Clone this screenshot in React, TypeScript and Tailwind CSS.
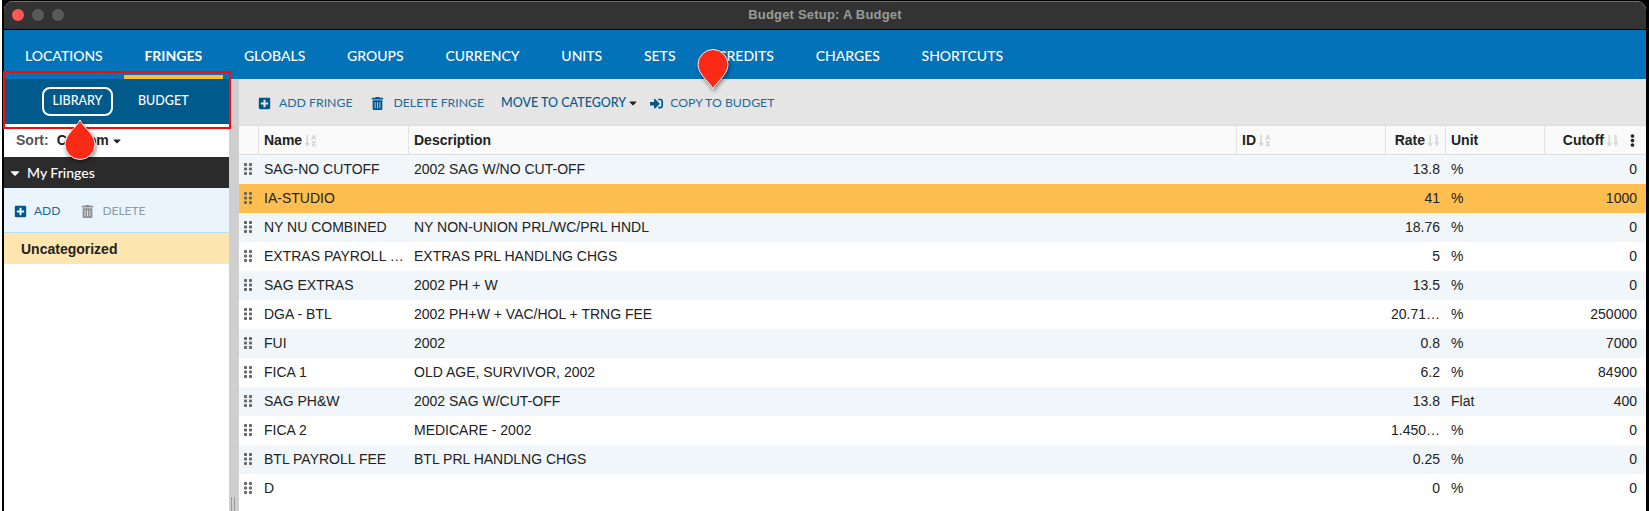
import { FaCaretDown, FaEllipsisV, FaPlusSquare, FaSignInAlt, FaSortAlphaDown, FaSortNumericDown, FaTrashAlt } from "react-icons/fa";

const tabs = ["LOCATIONS", "FRINGES", "GLOBALS", "GROUPS", "CURRENCY", "UNITS", "SETS", "CREDITS", "CHARGES", "SHORTCUTS"];

const rows = [
	{ name: "SAG-NO CUTOFF", desc: "2002 SAG W/NO CUT-OFF", rate: "13.8", unit: "%", cutoff: "0" },
	{ name: "IA-STUDIO", desc: "", rate: "41", unit: "%", cutoff: "1000" },
	{ name: "NY NU COMBINED", desc: "NY NON-UNION PRL/WC/PRL HNDL", rate: "18.76", unit: "%", cutoff: "0" },
	{ name: "EXTRAS PAYROLL …", desc: "EXTRAS PRL HANDLNG CHGS", rate: "5", unit: "%", cutoff: "0" },
	{ name: "SAG EXTRAS", desc: "2002 PH + W", rate: "13.5", unit: "%", cutoff: "0" },
	{ name: "DGA - BTL", desc: "2002 PH+W + VAC/HOL + TRNG FEE", rate: "20.71…", unit: "%", cutoff: "250000" },
	{ name: "FUI", desc: "2002", rate: "0.8", unit: "%", cutoff: "7000" },
	{ name: "FICA 1", desc: "OLD AGE, SURVIVOR, 2002", rate: "6.2", unit: "%", cutoff: "84900" },
	{ name: "SAG PH&W", desc: "2002 SAG W/CUT-OFF", rate: "13.8", unit: "Flat", cutoff: "400" },
	{ name: "FICA 2", desc: "MEDICARE - 2002", rate: "1.450…", unit: "%", cutoff: "0" },
	{ name: "BTL PAYROLL FEE", desc: "BTL PRL HANDLNG CHGS", rate: "0.25", unit: "%", cutoff: "0" },
	{ name: "D", desc: "", rate: "0", unit: "%", cutoff: "0" },
];

const gridCols = "grid grid-cols-[20px_150px_828px_149px_60px_99px_1fr]";

function Grip() {
	return (
		<svg width="8" height="12" viewBox="0 0 8 12" className="ml-[-2px] mt-[-2px] fill-[#666]">
			{[0, 4.5, 9].map((y) => (
				<g key={y}>
					<rect x="0" y={y} width="3" height="3" rx="0.8" />
					<rect x="5" y={y} width="3" height="3" rx="0.8" />
				</g>
			))}
		</svg>
	);
}

function Pin({ className, flip }: { className: string; flip?: boolean }) {
	return (
		<svg
			width="32"
			height="42"
			viewBox="0 0 32 42"
			className={`absolute drop-shadow-[1px_2px_2px_rgba(0,0,0,0.45)] ${className}`}
		>
			<path
				d={flip ? "M16 40C13 33 1 26 1 15.5a15 15 0 0 1 30 0C31 26 19 33 16 40Z" : "M16 2C19 9 31 16 31 26.5a15 15 0 0 1-30 0C1 16 13 9 16 2Z"}
				fill="#fb2a17"
				stroke="#f4f4f4"
				strokeWidth="1"
			/>
		</svg>
	);
}

function HeaderCell({ label, kind, right }: { label: string; kind?: "alpha" | "num"; right?: boolean }) {
	return (
		<div className={`flex items-center border-r border-[#e2e2e2] ${right ? "justify-end pr-[5px]" : "pl-[5px]"}`}>
			<span className="font-bold text-[#222]">{label}</span>
			{kind === "alpha" && <FaSortAlphaDown className="ml-[2px] text-[13px] text-[#d6d6d6]" />}
			{kind === "num" && <FaSortNumericDown className="ml-[2px] text-[13px] text-[#d6d6d6]" />}
		</div>
	);
}

export default function App() {
	return (
		<div className="relative flex h-[511px] w-[1649px] overflow-hidden bg-black pt-px pr-[3px] font-['Liberation_Sans',sans-serif]">
			<div className="absolute top-0 bottom-0 left-0 w-[2px] bg-white" />
			<div className="ml-[4px] flex min-w-0 flex-1 flex-col overflow-hidden rounded-t-[9px] bg-white">
				<div className="relative flex h-[28px] shrink-0 items-center justify-center border-t border-[#6f6f6f] bg-[#333333]">
					<div className="absolute top-[7px] left-[8px] flex gap-[8px]">
						<span className="h-[12px] w-[12px] rounded-full bg-[#fc5753]" />
						<span className="h-[12px] w-[12px] rounded-full bg-[#5a5a5a]" />
						<span className="h-[12px] w-[12px] rounded-full bg-[#5a5a5a]" />
					</div>
					<span className="mt-[-1px] text-[13px] font-bold tracking-[0.2px] text-[#9a9a9a]">Budget Setup: A Budget</span>
				</div>
				<div className="h-px shrink-0 bg-black" />
				<nav className="flex h-[49px] shrink-0 bg-[#0272b9] pl-[21px] font-['Lato',sans-serif] text-[14px] font-medium text-white">
					{tabs.map((tab) => (
						<span
							key={tab}
							className={`border-b-4 px-[20.85px] pt-[15px] first:pl-0 ${tab === "FRINGES" ? "border-[#fdbe33] font-bold" : "border-transparent"}`}
						>
							{tab}
						</span>
					))}
				</nav>
				<div className="flex min-h-0 flex-1">
					<aside className="flex w-[225px] shrink-0 flex-col bg-white">
						<div className="flex h-[45px] items-center bg-[#005a8c] pl-[38px] font-['Lato',sans-serif] text-[12.5px] font-medium text-white">
							<span className="flex h-[29px] w-[71px] items-center justify-center rounded-[8px] border-2 border-white">LIBRARY</span>
							<span className="ml-[25px]">BUDGET</span>
						</div>
						<div className="flex h-[33px] items-center pl-[12px] text-[14px] font-bold text-[#222]">
							<span className="mr-[8px] text-[#555]">Sort:</span>
							<span>Custom</span>
							<FaCaretDown className="ml-[2px] text-[12px]" />
						</div>
						<div className="flex h-[31px] items-center bg-[#2b2b2b] pl-[4px] font-['Lato',sans-serif] text-[14px] font-medium text-white">
							<FaCaretDown className="mr-[5px] text-[14px]" />
							My Fringes
						</div>
						<div className="flex h-[45px] items-center border-b border-[#b9dcee] bg-[#e9f4fc] pt-[2px] pl-[10px] font-['Lato',sans-serif] text-[12px]">
							<FaPlusSquare className="text-[13px] text-[#00568a]" />
							<span className="ml-[7px] text-[#1f6a99]">ADD</span>
							<FaTrashAlt className="ml-[21px] text-[13px] text-[#8f8f8f]" />
							<span className="ml-[8px] text-[#8f9ba3]">DELETE</span>
						</div>
						<div className="flex h-[31px] items-center bg-[#fde6b0] pt-[1px] pl-[17px] text-[14px] font-bold text-[#222]">Uncategorized</div>
					</aside>
					<div className="relative w-[10px] shrink-0 bg-[#cfcfcf]">
						<div className="absolute bottom-0 left-[2px] h-[14px] w-[4px] border-x border-[#999]" />
					</div>
					<main className="flex min-w-0 flex-1 flex-col">
						<div className="flex h-[46px] shrink-0 items-center bg-[#e5e5e5] pt-[2px] pl-[19px] font-['Lato',sans-serif] text-[12.25px] text-[#1f6a99]">
							<FaPlusSquare className="text-[13px] text-[#00568a]" />
							<span className="ml-[8px]">ADD FRINGE</span>
							<FaTrashAlt className="ml-[19px] text-[13px] text-[#00568a]" />
							<span className="ml-[9px]">DELETE FRINGE</span>
							<span className="ml-[17px] text-[12.5px] font-medium text-[#0a5a8c]">MOVE TO CATEGORY</span>
							<FaCaretDown className="ml-[1px] text-[12px] text-[#222]" />
							<FaSignInAlt className="ml-[11px] text-[13px] text-[#00568a]" />
							<span className="ml-[7px]">COPY TO BUDGET</span>
						</div>
						<div className={`${gridCols} h-[30px] shrink-0 border-y border-[#dcdcdc] bg-[#fafafa] text-[14px]`}>
							<div className="border-r border-[#e2e2e2]" />
							<HeaderCell label="Name" kind="alpha" />
							<HeaderCell label="Description" />
							<HeaderCell label="ID" kind="alpha" />
							<HeaderCell label="Rate" kind="num" right />
							<HeaderCell label="Unit" />
							<div className="flex items-center justify-end pr-[7px]">
								<span className="font-bold text-[#222]">Cutoff</span>
								<FaSortNumericDown className="ml-[2px] text-[13px] text-[#d6d6d6]" />
								<FaEllipsisV className="ml-[7px] text-[13px] text-[#222]" />
							</div>
						</div>
						{rows.map((row, i) => (
							<div
								key={row.name}
								className={`${gridCols} h-[29px] shrink-0 items-center text-[14px] text-[#222] ${
									i === 1 ? "bg-[#ffbe4f]" : i % 2 === 0 ? "bg-[#f0f6fa]" : "bg-white"
								}`}
							>
								<div className="flex justify-center">
									<Grip />
								</div>
								<div className="pl-[5px] whitespace-nowrap">{row.name}</div>
								<div className="pl-[5px]">{row.desc}</div>
								<div />
								<div className="pr-[6px] text-right">{row.rate}</div>
								<div className="pl-[5px]">{row.unit}</div>
								<div className="pr-[9px] text-right">{row.cutoff}</div>
							</div>
						))}
					</main>
				</div>
			</div>
			<div className="absolute top-[71px] left-[3px] h-[58px] w-[228px] border-2 border-[#f50d0d]" />
			<Pin className="top-[118px] left-[64px]" />
			<Pin flip className="top-[49px] left-[697px]" />
		</div>
	);
}
